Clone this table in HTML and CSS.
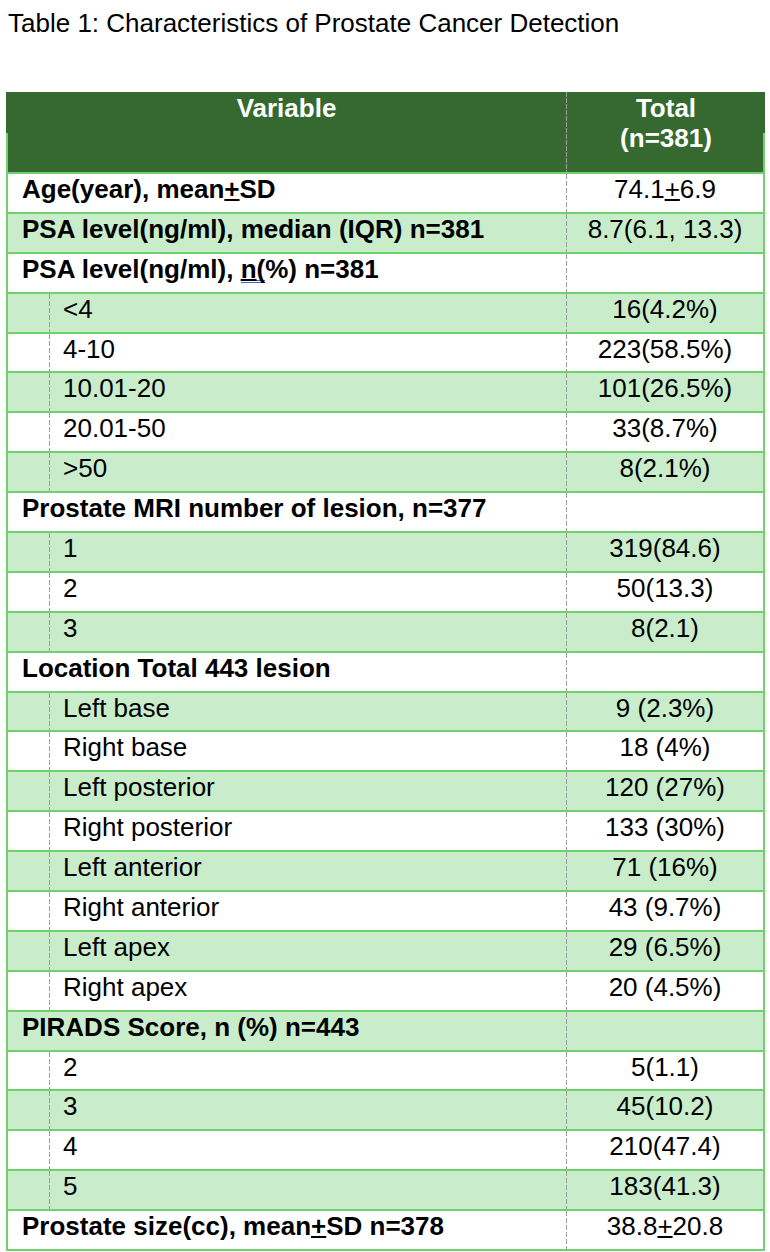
FILE: index.html
```html
<!DOCTYPE html>
<html lang="en">
<head>
<meta charset="utf-8">
<title>Table 1: Characteristics of Prostate Cancer Detection</title>
<link rel="stylesheet" href="styles.css">
</head>
<body>
<p class="title">Table 1: Characteristics of Prostate Cancer Detection</p>
<div class="tbl">
  <div class="head">
    <div class="hc hvar">Variable</div>
    <div class="hc htot">Total<br>(n=381)</div>
  </div>
  <div class="row"><div class="lab main">Age(year), mean<u>+</u>SD</div><div class="val">74.1<u>+</u>6.9</div></div>
  <div class="row"><div class="lab main">PSA level(ng/ml), median (IQR) n=381</div><div class="val">8.7(6.1, 13.3)</div></div>
  <div class="row"><div class="lab main">PSA level(ng/ml), <span class="mark"><u>n</u>(</span>%) n=381</div><div class="val"></div></div>
  <div class="row sub"><div class="lab"><div class="ind">&lt;4</div></div><div class="val">16(4.2%)</div></div>
  <div class="row sub"><div class="lab"><div class="ind">4-10</div></div><div class="val">223(58.5%)</div></div>
  <div class="row sub"><div class="lab"><div class="ind">10.01-20</div></div><div class="val">101(26.5%)</div></div>
  <div class="row sub"><div class="lab"><div class="ind">20.01-50</div></div><div class="val">33(8.7%)</div></div>
  <div class="row sub"><div class="lab"><div class="ind">&gt;50</div></div><div class="val">8(2.1%)</div></div>
  <div class="row"><div class="lab main">Prostate MRI number of lesion, n=377</div><div class="val"></div></div>
  <div class="row sub"><div class="lab"><div class="ind">1</div></div><div class="val">319(84.6)</div></div>
  <div class="row sub"><div class="lab"><div class="ind">2</div></div><div class="val">50(13.3)</div></div>
  <div class="row sub"><div class="lab"><div class="ind">3</div></div><div class="val">8(2.1)</div></div>
  <div class="row"><div class="lab main">Location Total 443 lesion</div><div class="val"></div></div>
  <div class="row sub"><div class="lab"><div class="ind">Left base</div></div><div class="val">9 (2.3%)</div></div>
  <div class="row sub"><div class="lab"><div class="ind">Right base</div></div><div class="val">18 (4%)</div></div>
  <div class="row sub"><div class="lab"><div class="ind">Left posterior</div></div><div class="val">120 (27%)</div></div>
  <div class="row sub"><div class="lab"><div class="ind">Right posterior</div></div><div class="val">133 (30%)</div></div>
  <div class="row sub"><div class="lab"><div class="ind">Left anterior</div></div><div class="val">71 (16%)</div></div>
  <div class="row sub"><div class="lab"><div class="ind">Right anterior</div></div><div class="val">43 (9.7%)</div></div>
  <div class="row sub"><div class="lab"><div class="ind">Left apex</div></div><div class="val">29 (6.5%)</div></div>
  <div class="row sub"><div class="lab"><div class="ind">Right apex</div></div><div class="val">20 (4.5%)</div></div>
  <div class="row"><div class="lab main">PIRADS Score, n (%) n=443</div><div class="val"></div></div>
  <div class="row sub"><div class="lab"><div class="ind">2</div></div><div class="val">5(1.1)</div></div>
  <div class="row sub"><div class="lab"><div class="ind">3</div></div><div class="val">45(10.2)</div></div>
  <div class="row sub"><div class="lab"><div class="ind">4</div></div><div class="val">210(47.4)</div></div>
  <div class="row sub"><div class="lab"><div class="ind">5</div></div><div class="val">183(41.3)</div></div>
  <div class="row last"><div class="lab main">Prostate size(cc), mean<u>+</u>SD n=378</div><div class="val">38.8<u>+</u>20.8</div></div>
</div>
</body>
</html>
```
FILE: styles.css
```css
* {
  box-sizing: border-box;
}

html, body {
  background: #ffffff;
}

body {
  margin: 0;
  font-family: "Liberation Sans", Arial, sans-serif;
  font-size: 26px;
  line-height: 30px;
  color: #000000;
}

.title {
  margin: 0;
  padding: 8px 0 0 8px;
  height: 38px;
  white-space: nowrap;
}

.tbl {
  margin: 54px 0 0 6px;
  width: 759px;
}

.head {
  height: 80px;
  display: grid;
  grid-template-columns: 561px 1fr;
  color: #ffffff;
  font-weight: bold;
  text-align: center;
  background:
    linear-gradient(#6fd06c, #6fd06c) left bottom / 2px 39px no-repeat,
    linear-gradient(#6fd06c, #6fd06c) right bottom / 2px 39px no-repeat,
    #35692f;
}

.hc {
  padding-top: 1px;
}

.hvar {
  background: repeating-linear-gradient(to bottom, #9c9c9c 0 5px, transparent 5px 6px) right top / 1px 100% no-repeat;
}

.row {
  height: 39.9px;
  display: grid;
  grid-template-columns: 559px 1fr;
  border-top: 2px solid #6fd06c;
  border-left: 2px solid #6fd06c;
  border-right: 2px solid #6fd06c;
  background-color: #ffffff;
}

.row:nth-child(odd) {
  background-color: #c9edca;
}

.row.last {
  height: 41.9px;
  border-bottom: 2px solid #6fd06c;
}

.lab {
  height: 100%;
  padding-left: 14px;
  white-space: nowrap;
  background: repeating-linear-gradient(to bottom, #9c9c9c 0 5px, transparent 5px 7px) right top / 1px 100% no-repeat;
}

.lab.main {
  font-weight: bold;
}

.sub .lab {
  padding-left: 41px;
}

.ind {
  height: 100%;
  padding-left: 14px;
  background: repeating-linear-gradient(to bottom, #9c9c9c 0 5px, transparent 5px 7px) left top / 1px 100% no-repeat;
}

.val {
  text-align: center;
  white-space: nowrap;
}

u {
  text-decoration-line: underline;
  text-decoration-color: #000000;
  text-decoration-thickness: 2px;
  text-underline-offset: 1px;
}

.mark {
  display: inline-block;
  height: 29.7px;
  border-bottom: 3px double #3a63d8;
  vertical-align: baseline;
}
```
